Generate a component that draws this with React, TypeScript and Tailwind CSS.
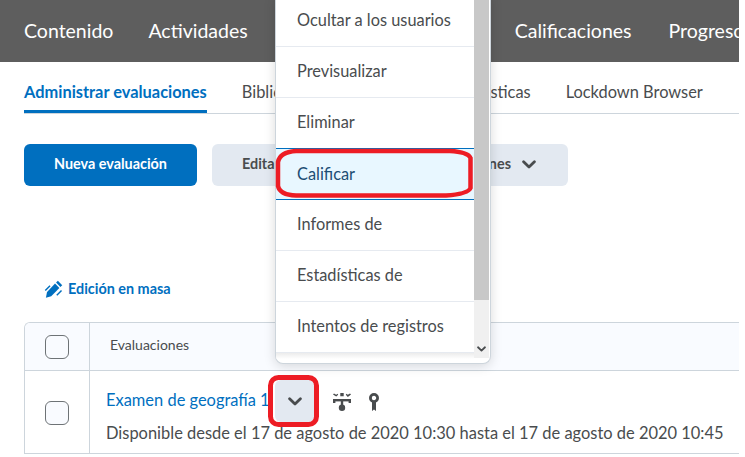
import React from "react";

function Chevron({ className }: { className?: string }) {
  return (
    <svg viewBox="0 0 14 9" className={className} fill="none" stroke="#494c4e" strokeWidth="2.8" strokeLinecap="round" strokeLinejoin="round">
      <path d="M1.6 1.8 7 7 12.4 1.8" />
    </svg>
  );
}

function MenuItem({ label, active }: { label: string; active?: boolean }) {
  return (
    <div
      className={
        "flex shrink-0 items-center pl-[21px] text-[16.35px] " +
        (active
          ? "mt-[-1px] h-[52px] border-y border-[#006fbf] bg-[#e8f7ff] text-[#1c4e74]"
          : "h-[51px] border-b border-[#e6eaf0] pb-[2px] text-[#494c4e]")
      }
    >
      {label}
    </div>
  );
}

export default function App() {
  return (
    <div className="relative h-[457px] w-[745px] overflow-hidden bg-white font-['Lato','Noto_Sans',sans-serif]">
      <div className="w-[739px]">
        <nav className="flex h-[62px] items-center overflow-hidden whitespace-nowrap bg-[#5e5e5e] pb-[1px] pl-[24px] text-[19.5px] text-white">
          <span>Contenido</span>
          <span className="ml-[35px]">Actividades</span>
          <span className="ml-[267px]">Calificaciones</span>
          <span className="ml-[37px]">Progreso</span>
        </nav>

        <div className="ml-[24px] mt-[3px] flex h-[49px] items-stretch whitespace-nowrap border-b border-[#cdd5dc] text-[16.4px] text-[#494c4e]">
          <span className="relative flex items-center pt-[6px] font-bold text-[#006fbf]">
            Administrar evaluaciones
            <span className="absolute bottom-0 left-0 right-0 h-[3px] bg-[#006fbf]" />
          </span>
          <span className="ml-[35px] flex w-[169px] items-center pt-[6px]">Biblioteca de preguntas</span>
          <span className="ml-[36px] flex items-center pt-[6px]">Estadísticas</span>
          <span className="ml-[35px] flex items-center pt-[6px]">Lockdown Browser</span>
        </div>

        <div className="ml-[24px] mt-[30px] flex items-center gap-[15px] text-[14.4px] font-bold">
          <div className="flex h-[42px] w-[173px] items-center justify-center rounded-[6px] bg-[#006fbf] pb-[2px] text-white">
            Nueva evaluación
          </div>
          <div className="flex h-[42px] w-[356px] items-center justify-between rounded-[6px] bg-[#e3e9f1] pl-[30px] pr-[32px] text-[#494c4e]">
            <span className="pb-[2px]">Editar</span>
            <span className="flex items-center gap-[11px]">
              <span className="pb-[2px]">Más acciones</span>
              <Chevron className="h-[9px] w-[14px]" />
            </span>
          </div>
        </div>

        <div className="ml-[44px] mt-[93px] flex h-[20px] items-center gap-[5px] text-[14.4px] font-bold text-[#006fbf]">
          <svg viewBox="0 0 20 20" className="h-[19px] w-[19px]" fill="#006fbf">
            <path d="M14.6.8l4.6 4.6-1.9 1.9-4.6-4.6z" />
            <path d="M11.6 3.8l4.6 4.6-8.6 8.6-5.6 1.6 1.2-6z" />
            <path d="M.8 10.4l5-5 1.1 1.1-5 5zM12.9 15.4l5-5 1.1 1.1-5 5z" />
          </svg>
          Edición en masa
        </div>

        <div className="ml-[24px] mt-[23px] overflow-hidden rounded-tl-[6px] border-l border-t border-[#cdd5dc] text-[#494c4e]">
          <div className="flex h-[48px] border-b border-[#cdd5dc] bg-[#f9fbff]">
            <div className="flex w-[65px] items-center justify-center border-r border-[#cdd5dc]">
              <span className="h-[24px] w-[24px] rounded-[6px] border border-[#6e7376] bg-[#f9fbff]" />
            </div>
            <div className="flex items-center pb-[4px] pl-[20px] text-[14px]">Evaluaciones</div>
          </div>
          <div className="flex h-[83px] border-b border-[#cdd5dc] bg-white">
            <div className="flex w-[65px] items-center justify-center border-r border-[#cdd5dc] pt-[2px]">
              <span className="h-[24px] w-[24px] rounded-[6px] border border-[#6e7376] bg-[#f9fbff]" />
            </div>
            <div className="pl-[16px] pt-[19px] text-[16.45px] leading-[20px]">
              <div className="flex h-[25px] items-start whitespace-nowrap">
                <span className="text-[#006fbf]">Examen de geografía 1</span>
                <span className="ml-[5px] mt-[-10px] flex h-[42px] w-[42px] shrink-0 items-center justify-center rounded-[6px] bg-[#e3e9f1] pr-[2px]">
                  <Chevron className="h-[9px] w-[14px]" />
                </span>
                <svg viewBox="0 0 18 18" className="ml-[16px] mt-[3px] h-[18px] w-[18px] shrink-0" fill="#494c4e">
                  <path d="M0 1.500l1 -1 2.200 1.300 1.300-1 .7 1-2 1.700zM7.300 0h3.400v3.200H7.300zM12.800 1.800l.7-1 1.300 1 2.200-1.300 1 1-3.200 2.500z" />
                  <rect x="0" y="6" width="18" height="2.400" />
                  <rect x="7.800" y="6" width="2.400" height="8" />
                  <rect x="0" y="6" width="2.400" height="4" />
                  <rect x="15.600" y="6" width="2.400" height="4" />
                  <circle cx="9" cy="14.800" r="3.200" />
                </svg>
                <svg viewBox="0 0 10 18" className="ml-[18px] mt-[3px] h-[18px] w-[10px] shrink-0">
                  <circle cx="5" cy="5" r="3.600" fill="none" stroke="#494c4e" strokeWidth="2.800" />
                  <path d="M3 8h4v10L5 16.600 3 18z" fill="#494c4e" />
                </svg>
              </div>
              <div className="mt-[8px] whitespace-nowrap">
                Disponible desde el 17 de agosto de 2020 10:30 hasta el 17 de agosto de 2020 10:45
              </div>
            </div>
          </div>
        </div>
      </div>

      <div className="absolute left-[275px] top-[-4px] flex h-[368px] w-[216px] overflow-hidden rounded-b-[8px] border-x border-b border-[#cdd5dc] bg-white shadow-[0_2px_12px_rgba(0,0,0,0.15)]">
        <div className="flex w-[198px] shrink-0 flex-col whitespace-nowrap">
          <MenuItem label="Ocultar a los usuarios" />
          <MenuItem label="Previsualizar" />
          <MenuItem label="Eliminar" />
          <MenuItem label="Calificar" active />
          <MenuItem label="Informes de" />
          <MenuItem label="Estadísticas de" />
          <MenuItem label="Intentos de registros" />
          <div className="h-[6px] bg-gradient-to-b from-[#ececec] to-white" />
        </div>
        <div className="relative flex h-[362px] w-[15px] shrink-0 flex-col bg-[#f0f0f0]">
          <div className="h-[304px] bg-[#c8c8c8]" />
          <Chevron className="absolute bottom-[6px] left-[3px] h-[6px] w-[9px]" />
        </div>
      </div>

      <svg className="pointer-events-none absolute left-0 top-0" width="745" height="457" fill="none" stroke="#ed1c24" strokeWidth="4.500">
        <path d="M296 151 H450 Q468 152 470.500 158 V188 Q468 194 446 195.500 H296 Q280 195 278 186 V162 Q280 152 296 151Z" />
        <rect x="270.500" y="377.500" width="46" height="47" rx="8" strokeWidth="5" />
      </svg>
    </div>
  );
}
